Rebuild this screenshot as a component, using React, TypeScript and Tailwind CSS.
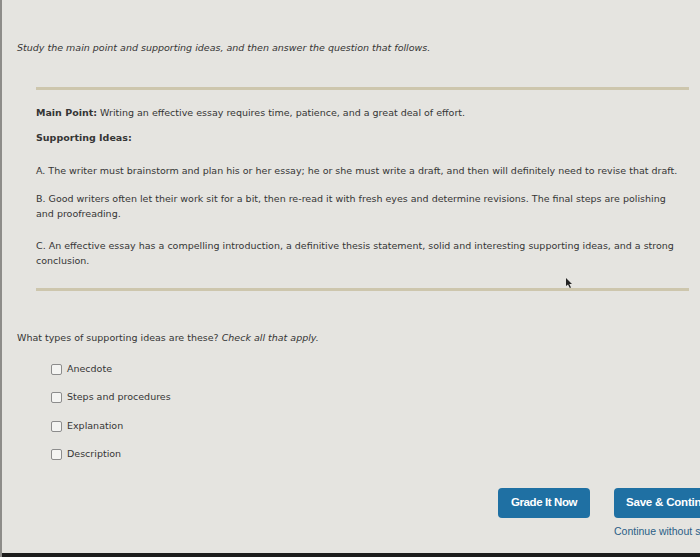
import { useState } from 'react'

const options = ['Anecdote', 'Steps and procedures', 'Explanation', 'Description']

export default function App() {
  const [checked, setChecked] = useState<string[]>([])

  const toggle = (o: string) =>
    setChecked((c) => (c.includes(o) ? c.filter((x) => x !== o) : [...c, o]))

  return (
    <div
      className="relative flex h-[557px] w-[700px] flex-col overflow-hidden border-l-2 border-[#8d8c89] bg-[#e5e4e0] text-[#353535]"
      style={{ fontFamily: '"DejaVu Sans", Verdana, sans-serif' }}
    >
      <p className="mt-[42px] pl-[15px] text-[9.5px] italic leading-[12px]">
        Study the main point and supporting ideas, and then answer the question that follows.
      </p>

      <div className="ml-[34px] mr-[11px] flex flex-col">
        <div className="mt-[33px] h-[3px] bg-[#cdc6ad]" />

        <p className="mt-[17px] text-[9.5px] leading-[12px]">
          <span className="font-bold">Main Point:</span> Writing an effective essay requires time,
          patience, and a great deal of effort.
        </p>
        <p className="mt-[13px] text-[9.5px] font-bold leading-[12px]">Supporting Ideas:</p>

        <div className="mt-[19px] flex w-[654px] flex-col text-[9.5px] leading-[15px]">
          <p>
            A. The writer must brainstorm and plan his or her essay; he or she must write a draft, and
            then will definitely need to revise that draft.
          </p>
          <p className="mt-[13px]">
            B. Good writers often let their work sit for a bit, then re-read it with fresh eyes and
            determine revisions. The final steps are polishing
            <br />
            and proofreading.
          </p>
          <p className="mt-[17px]">
            C. An effective essay has a compelling introduction, a definitive thesis statement, solid
            and interesting supporting ideas, and a strong
            <br />
            conclusion.
          </p>
        </div>

        <div className="relative mt-[20px] h-[3px] bg-[#cdc6ad]">
          <svg
            className="absolute left-[529px] top-[-11px]"
            width="9"
            height="12"
            viewBox="0 0 9 12"
          >
            <path d="M1 1 L1 9 L3 7.5 L4.8 11 L6 10.4 L4.3 7 L7 7 Z" fill="#222" />
          </svg>
        </div>
      </div>

      <p className="mt-[41px] pl-[15px] text-[9.5px] leading-[12px]">
        What types of supporting ideas are these? <span className="italic">Check all that apply.</span>
      </p>

      <div className="ml-[49px] mt-[19px] flex flex-col gap-[16.5px]">
        {options.map((o) => (
          <label key={o} className="flex h-[12px] cursor-pointer items-center gap-[5px] text-[9.5px]">
            <span
              onClick={() => toggle(o)}
              className="flex h-[11px] w-[11px] items-center justify-center rounded-[2px] border border-[#8c8c8c] bg-[#f4f4f2] text-[8px] leading-none"
            >
              {checked.includes(o) ? '✓' : ''}
            </span>
            <span>{o}</span>
          </label>
        ))}
      </div>

      <div className="mt-auto flex justify-end gap-[24px] pb-[39px]">
        <button
          className="h-[30px] w-[92px] rounded-[4px] bg-[#1f70a3] text-[11.5px] font-bold tracking-[-0.4px] text-white"
          style={{ fontFamily: '"Liberation Sans", Arial, sans-serif' }}
        >
          Grade It Now
        </button>
        <div className="relative flex w-[86px] flex-col">
          <button
            className="h-[30px] w-[100px] whitespace-nowrap rounded-l-[4px] bg-[#1f70a3] pl-[12px] text-left text-[11.5px] font-bold tracking-[-0.2px] text-white"
            style={{ fontFamily: '"Liberation Sans", Arial, sans-serif' }}
          >
            Save &amp; Continue
          </button>
          <span
            className="absolute top-[36px] whitespace-nowrap text-[10.5px] text-[#2a5e86]"
            style={{ fontFamily: '"Liberation Sans", Arial, sans-serif' }}
          >
            Continue without saving
          </span>
        </div>
      </div>

      <div className="absolute bottom-0 left-0 h-[4px] w-full bg-[#1c1c1c]" />
    </div>
  )
}
